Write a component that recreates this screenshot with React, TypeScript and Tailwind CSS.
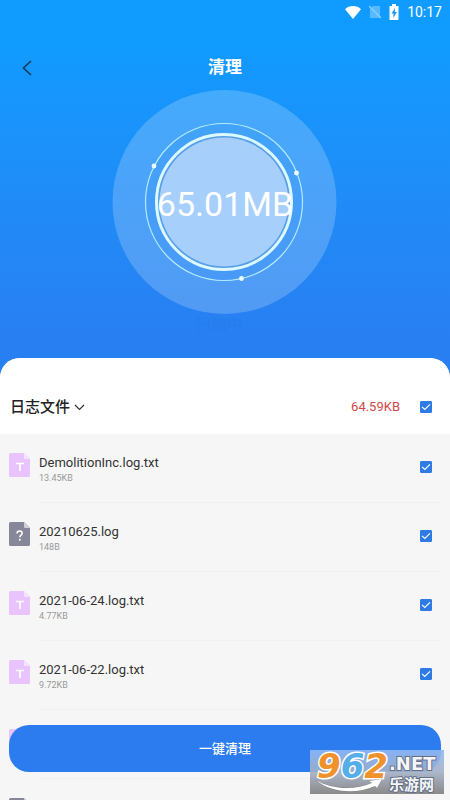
import { useState } from "react";

type LogFile = {
  name: string;
  size: string;
  kind: "text" | "unknown";
};

const FILES: LogFile[] = [
  { name: "DemolitionInc.log.txt", size: "13.45KB", kind: "text" },
  { name: "20210625.log", size: "148B", kind: "unknown" },
  { name: "2021-06-24.log.txt", size: "4.77KB", kind: "text" },
  { name: "2021-06-22.log.txt", size: "9.72KB", kind: "text" },
  { name: "", size: "", kind: "text" },
  { name: "", size: "", kind: "unknown" },
];

function StatusBar() {
  return (
    <div className="flex h-6 items-center justify-end gap-2 pr-2 text-white">
      <svg viewBox="0 0 16 13" className="h-[13px] w-4" fill="currentColor" aria-hidden="true">
        <path d="M8 13 0 3.2C2.2 1.200 5 0 8 0s5.800 1.200 8 3.200z" />
      </svg>
      <svg viewBox="0 0 12 14" className="h-3.5 w-3 opacity-50" aria-hidden="true">
        <path d="M4 1h7v12H1V4z" fill="currentColor" opacity="0.6" />
        <path d="M0 1l12 12" stroke="currentColor" strokeWidth="1.500" />
      </svg>
      <svg viewBox="0 0 10 16" className="h-4 w-2.5" aria-hidden="true">
        <path d="M3 0h4v2h2.500v14h-9V2H3z" fill="currentColor" />
        <path d="M6 4 2.500 9.500h2V14L7.800 8h-2z" fill="#1597fb" />
      </svg>
      <span className="text-sm">10:17</span>
    </div>
  );
}

function Gauge({ value }: { value: string }) {
  return (
    <div className="relative mx-auto size-[226px]">
      <svg viewBox="0 0 226 226" className="size-full" fill="none" aria-hidden="true">
        <circle cx="112.500" cy="113" r="112" fill="#fff" fillOpacity="0.2" />
        <circle cx="112" cy="113" r="78.500" fill="#2c90fa" fillOpacity="0.2" />
        <circle cx="112" cy="113" r="78.500" stroke="#b4ecff" strokeWidth="1.200" />
        <circle cx="112" cy="113" r="66" fill="#5a9fe6" />
        <circle cx="112" cy="113" r="64.500" fill="#a6d0fb" />
        <circle cx="112" cy="113" r="67.500" stroke="#dcf9ff" strokeWidth="3" />
        <circle cx="42" cy="77" r="2.400" fill="#effcff" />
        <circle cx="184.500" cy="84" r="2.400" fill="#effcff" />
        <circle cx="129.500" cy="189.500" r="2.400" fill="#effcff" />
      </svg>
      <div className="absolute inset-0 flex items-center justify-center pt-1 text-[34px] text-white">
        {value}
      </div>
    </div>
  );
}

function FileIcon({ kind }: { kind: LogFile["kind"] }) {
  const dark = kind === "unknown";
  return (
    <svg viewBox="0 0 21 24" className="h-6 w-[21px] shrink-0" fill="none" aria-hidden="true">
      <path
        d="M1.500 0H15l6 6v16.500a1.500 1.500 0 0 1-1.500 1.500h-18A1.500 1.500 0 0 1 0 22.500v-21A1.500 1.500 0 0 1 1.500 0z"
        fill={dark ? "#87879a" : "#e8c3fd"}
      />
      <path d="M15 0l6 6h-5a1 1 0 0 1-1-1z" fill={dark ? "#cfcfd8" : "#f4e2fe"} />
      {dark ? (
        <>
          <path
            d="M8 11.500c0-1.600 1.100-2.600 2.600-2.600s2.600 1 2.600 2.300c0 1.900-2.400 2-2.400 4.100"
            stroke="#fff"
            strokeWidth="1.500"
          />
          <circle cx="10.800" cy="17.800" r="1" fill="#fff" />
        </>
      ) : (
        <path d="M7 10.500h8M11 10.500V18" stroke="#fff" strokeWidth="1.700" />
      )}
    </svg>
  );
}

function Tick({
  label,
  checked,
  onChange,
}: {
  label: string;
  checked: boolean;
  onChange: () => void;
}) {
  return (
    <label className="relative block size-3 shrink-0">
      <input
        type="checkbox"
        aria-label={label}
        checked={checked}
        onChange={onChange}
        className="block size-3 appearance-none rounded-[1px] border border-[#2f7be6] bg-white checked:bg-[#2f7be6]"
      />
      {checked && (
        <svg
          viewBox="0 0 12 12"
          className="pointer-events-none absolute inset-0 size-3"
          fill="none"
          aria-hidden="true"
        >
          <path d="M2 5.800l2.800 2.700L10 3.300" stroke="#fff" strokeWidth="1.100" />
        </svg>
      )}
    </label>
  );
}

function Watermark() {
  return (
    <div className="absolute right-1.5 bottom-1.5 flex h-11 w-[134px] bg-linear-to-b from-[#8fb8f6]/90 via-[#a3b0c6]/90 to-[#7e7e7e]/90 pl-[7px]">
      <div className="relative w-[72px] font-['DejaVu_Sans'] text-[34px] leading-8 font-bold italic [paint-order:stroke_fill] [-webkit-text-stroke:3px_#fff]">
        <span className="text-[#f0922b]">9</span>
        <span className="text-[#56aee8]">6</span>
        <span className="text-[#f0922b]">2</span>
        <svg viewBox="0 0 70 16" className="absolute top-7 -left-1 h-4 w-[72px]" aria-hidden="true">
          <path
            d="M2 2c14 9 38 11 56 3l-3-2 13-2-5 9-2-2C41 17 15 14 2 2z"
            fill="#fff"
            stroke="#777"
            strokeWidth="0.600"
          />
        </svg>
      </div>
      <div className="flex flex-col gap-1 pt-1.5 whitespace-nowrap text-[#f4f6fa] [paint-order:stroke_fill] [-webkit-text-stroke:2px_#667085]">
        <span className="font-['DejaVu_Sans'] text-lg leading-4 font-bold">.NET</span>
        <span className="font-['Noto_Sans_CJK_SC',sans-serif] text-[15px] leading-4 font-bold">
          乐游网
        </span>
      </div>
    </div>
  );
}

export default function App() {
  const [selected, setSelected] = useState<boolean[]>(FILES.map(() => true));
  const allSelected = selected.every(Boolean);

  function toggle(index: number) {
    setSelected((prev) => prev.map((on, i) => (i === index ? !on : on)));
  }

  return (
    <div className="relative flex h-screen flex-col overflow-hidden bg-linear-to-b from-[#0f9bff] from-5% to-[#287ff1] to-42% font-[Roboto,'Noto_Sans_CJK_SC',sans-serif]">
      <StatusBar />

      <header className="grid h-[65px] grid-cols-[54px_1fr_54px] items-center pt-[22px]">
        <button type="button" aria-label="返回" className="flex h-full items-center pl-[22px]">
          <svg viewBox="0 0 10 16" className="h-4 w-2.5" fill="none" aria-hidden="true">
            <path d="M9 1 1.500 8 9 15" stroke="#173a5c" strokeWidth="1.700" />
          </svg>
        </button>
        <h1 className="text-center text-[17px] font-bold text-white">清理</h1>
      </header>

      <Gauge value="65.01MB" />
      <p className="h-[43px] pt-0.5 pr-3 text-center text-base leading-4 text-[#267ded]">扫描中</p>

      <main className="min-h-0 flex-1 overflow-hidden rounded-t-[20px] bg-[#f6f6f6]">
        <div className="flex h-[76px] items-center bg-white pt-[22px] pr-[18px] pl-2.5">
          <button type="button" className="flex items-center gap-1 text-[15px] font-medium text-[#222]">
            日志文件
            <svg viewBox="0 0 11 7" className="h-[7px] w-[11px]" fill="none" aria-hidden="true">
              <path d="M1 1l4.500 4.500L10 1" stroke="#333" strokeWidth="1.200" />
            </svg>
          </button>
          <span className="mr-5 ml-auto text-[13px] text-[#d0474b]">64.59KB</span>
          <Tick
            label="全选"
            checked={allSelected}
            onChange={() => setSelected(FILES.map(() => !allSelected))}
          />
        </div>

        <ul>
          {FILES.map((file, i) => (
            <li key={i} className="flex h-[69px] pl-[9px]">
              <div className="pt-[19px]">
                <FileIcon kind={file.kind} />
              </div>
              <div className="mr-2.5 ml-[9px] flex flex-1 justify-between border-b border-[#f0f0f0] pt-5 pr-2">
                <div>
                  <p className="text-[13px] leading-[18px] text-[#333]">{file.name}</p>
                  <p className="text-[9px] leading-3 text-[#999]">{file.size}</p>
                </div>
                <div className="pt-[7px]">
                  <Tick
                    label={file.name || "日志文件"}
                    checked={selected[i]}
                    onChange={() => toggle(i)}
                  />
                </div>
              </div>
            </li>
          ))}
        </ul>
      </main>

      <div className="absolute inset-x-0 bottom-7 px-[9px]">
        <button
          type="button"
          className="h-[47px] w-full rounded-[20px] bg-[#2d7cef] text-[13px] font-medium text-white"
        >
          一键清理
        </button>
      </div>

      <Watermark />
    </div>
  );
}
